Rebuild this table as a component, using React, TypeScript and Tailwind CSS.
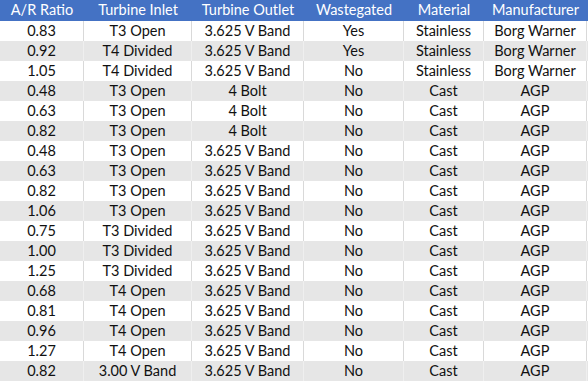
const rows: string[][] = [
  ['0.83', 'T3 Open', '3.625 V Band', 'Yes', 'Stainless', 'Borg Warner'],
  ['0.92', 'T4 Divided', '3.625 V Band', 'Yes', 'Stainless', 'Borg Warner'],
  ['1.05', 'T4 Divided', '3.625 V Band', 'No', 'Stainless', 'Borg Warner'],
  ['0.48', 'T3 Open', '4 Bolt', 'No', 'Cast', 'AGP'],
  ['0.63', 'T3 Open', '4 Bolt', 'No', 'Cast', 'AGP'],
  ['0.82', 'T3 Open', '4 Bolt', 'No', 'Cast', 'AGP'],
  ['0.48', 'T3 Open', '3.625 V Band', 'No', 'Cast', 'AGP'],
  ['0.63', 'T3 Open', '3.625 V Band', 'No', 'Cast', 'AGP'],
  ['0.82', 'T3 Open', '3.625 V Band', 'No', 'Cast', 'AGP'],
  ['1.06', 'T3 Open', '3.625 V Band', 'No', 'Cast', 'AGP'],
  ['0.75', 'T3 Divided', '3.625 V Band', 'No', 'Cast', 'AGP'],
  ['1.00', 'T3 Divided', '3.625 V Band', 'No', 'Cast', 'AGP'],
  ['1.25', 'T3 Divided', '3.625 V Band', 'No', 'Cast', 'AGP'],
  ['0.68', 'T4 Open', '3.625 V Band', 'No', 'Cast', 'AGP'],
  ['0.81', 'T4 Open', '3.625 V Band', 'No', 'Cast', 'AGP'],
  ['0.96', 'T4 Open', '3.625 V Band', 'No', 'Cast', 'AGP'],
  ['1.27', 'T4 Open', '3.625 V Band', 'No', 'Cast', 'AGP'],
  ['0.82', '3.00 V Band', '3.625 V Band', 'No', 'Cast', 'AGP'],
];

const headers = ['A/R Ratio', 'Turbine Inlet', 'Turbine Outlet', 'Wastegated', 'Material', 'Manufacturer'];

export default function App() {
  return (
    <div className="w-[588px] h-[381px] bg-white text-[14.5px] text-[#111] font-['Lato',sans-serif] leading-none">
      <div className="grid grid-cols-[84px_108px_112px_100px_80px_103px] h-[21px] bg-[#4472c4] text-white">
        {headers.map((h) => (
          <div key={h} className="flex items-center justify-center">
            {h}
          </div>
        ))}
      </div>
      {rows.map((r, i) => (
        <div
          key={i}
          className={`grid grid-cols-[84px_108px_112px_100px_80px_103px] h-[20px] ${
            i % 2 === 1 ? 'bg-[#e6e6e6]' : 'bg-white'
          }`}
        >
          {r.map((c, j) => (
            <div
              key={j}
              className={`flex items-center justify-center border-r ${
                i % 2 === 1 ? 'border-[#efefef]' : 'border-[#d9d9d9]'
              }`}
            >
              {c}
            </div>
          ))}
        </div>
      ))}
    </div>
  );
}
